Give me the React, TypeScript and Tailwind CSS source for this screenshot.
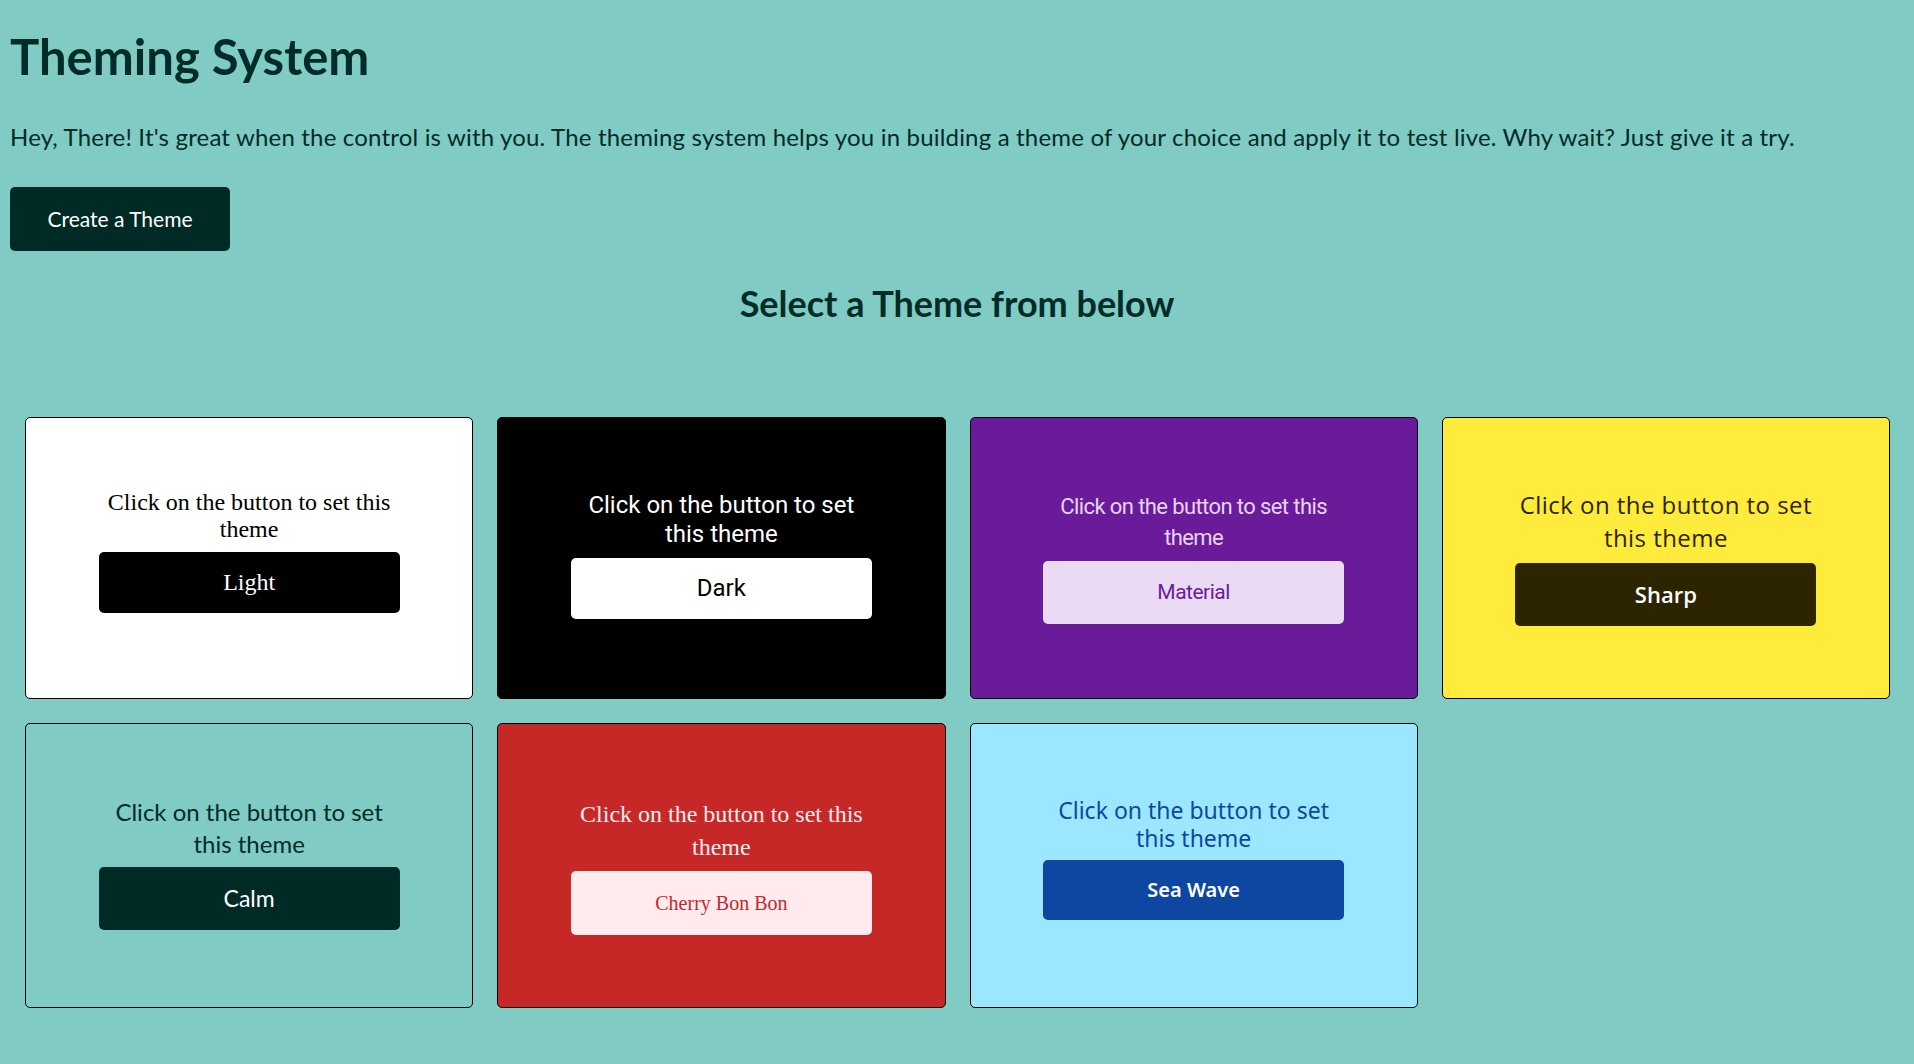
import React from "react";

type Theme = {
  name: string;
  lines: [string, string];
  card: string;
  text: string;
  btn: string;
};

const themes: Theme[] = [
  {
    name: "Light",
    lines: ["Click on the button to set this", "theme"],
    card: "bg-white font-['Liberation_Serif',serif] pt-[71px]",
    text: "text-black text-[24px] leading-[27.6px]",
    btn: "bg-black text-white text-[24px] h-[61px] mt-2",
  },
  {
    name: "Dark",
    lines: ["Click on the button to set", "this theme"],
    card: "bg-black font-['Roboto',sans-serif] pt-[73px]",
    text: "text-white text-[24px] leading-[29px]",
    btn: "bg-white text-black text-[24px] h-[61px] mt-[9px]",
  },
  {
    name: "Material",
    lines: ["Click on the button to set this", "theme"],
    card: "bg-[#6a1b9a] font-['Roboto',sans-serif] pt-[74px]",
    text: "text-[#e8d3f1] text-[22px] tracking-[-0.6px] leading-[30.7px] whitespace-nowrap",
    btn: "bg-[#ebdaf3] text-[#6a1b9a] text-[21px] tracking-[-0.5px] h-[63px] mt-2",
  },
  {
    name: "Sharp",
    lines: ["Click on the button to set", "this theme"],
    card: "bg-[#ffeb3b] font-['Open_Sans',sans-serif] pt-[70px]",
    text: "text-[#2c2500] text-[24px] tracking-[0.45px] leading-[33px] whitespace-nowrap",
    btn: "bg-[#2c2500] text-white text-[22px] font-semibold h-[63px] mt-[9px]",
  },
  {
    name: "Calm",
    lines: ["Click on the button to set", "this theme"],
    card: "bg-[#80cbc4] font-['Lato',sans-serif] pt-[72px]",
    text: "text-[#002c27] text-[24px] leading-[31.7px]",
    btn: "bg-[#002a25] text-white text-[23px] h-[63px] mt-2",
  },
  {
    name: "Cherry Bon Bon",
    lines: ["Click on the button to set this", "theme"],
    card: "bg-[#c62828] font-['Liberation_Serif',serif] pt-[74px]",
    text: "text-[#ffebee] text-[24px] leading-[32.7px]",
    btn: "bg-[#ffebee] text-[#c62828] text-[20px] h-[64px] mt-2",
  },
  {
    name: "Sea Wave",
    lines: ["Click on the button to set", "this theme"],
    card: "bg-[#9be7ff] font-['Noto_Sans',sans-serif] pt-[72px]",
    text: "text-[#0d47a1] text-[23px] leading-[28.3px] whitespace-nowrap",
    btn: "bg-[#0d47a1] text-white text-[20px] font-semibold h-[60px] mt-2",
  },
];

function ThemeCard({ theme }: { theme: Theme }) {
  return (
    <div className={`flex flex-col items-center rounded-[5px] border border-black pb-[72px] ${theme.card}`}>
      <p className={`w-[301px] text-center ${theme.text}`}>
        {theme.lines[0]}
        <br />
        {theme.lines[1]}
      </p>
      <button className={`w-[301px] rounded-[5px] ${theme.btn}`}>{theme.name}</button>
    </div>
  );
}

export default function App() {
  return (
    <div className="min-h-screen bg-[#80cbc4] pb-10 font-['Lato',sans-serif] text-[#002c27]">
      <div className="px-[10px]">
        <h1 className="pt-[27px] text-[49px] font-bold leading-[59px]">Theming System</h1>
        <p className="mt-[37px] text-[24px] leading-[28.8px] tracking-[0.18px]">
          Hey, There! It's great when the control is with you. The theming system helps you in building a theme of
          your choice and apply it to test live. Why wait? Just give it a try.
        </p>
        <button className="mt-[35px] h-[64px] w-[220px] rounded-[5px] bg-[#002a25] text-[21px] text-white">
          Create a Theme
        </button>
      </div>

      <h2 className="mt-[31px] text-center text-[36px] font-bold leading-[43px]">Select a Theme from below</h2>

      {/* theme cards */}
      <div className="mt-[92px] grid grid-cols-4 gap-x-[24px] gap-y-[24px] pl-[25px] pr-[24px]">
        {themes.map((t) => (
          <ThemeCard key={t.name} theme={t} />
        ))}
      </div>
    </div>
  );
}
